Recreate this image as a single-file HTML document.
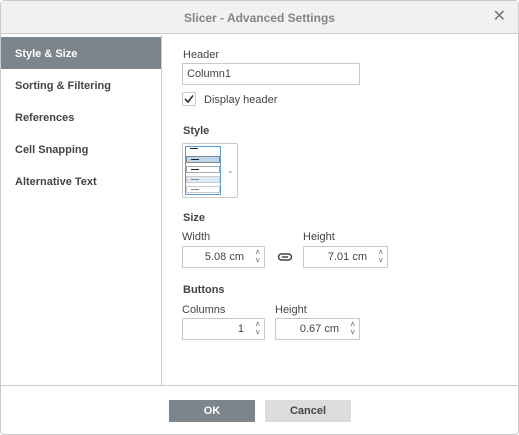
<!DOCTYPE html><html><head><style>
*{box-sizing:border-box;margin:0;padding:0}
body{width:519px;height:435px;background:#fff;font-family:"Liberation Sans",Arial,sans-serif;font-size:11px;color:#444;position:relative;overflow:hidden}
.frame{position:absolute;left:0;top:0;width:519px;height:435px;border:1px solid #cbcbcb;border-radius:4px}
.title{position:absolute;left:1px;top:1px;width:517px;height:33px;background:#f1f1f1;border-bottom:1px solid #cbcbcb;text-align:center;line-height:34px;font-size:12px;font-weight:bold;color:#848484}
.x{position:absolute;right:12px;top:8px;font-size:16px;color:#777;font-weight:normal;line-height:16px}
.side{position:absolute;left:161px;top:35px;height:350px;border-left:1px solid #cbcbcb}
.it{position:absolute;left:1px;width:160px;height:32px;line-height:34px;padding-left:14px;font-weight:bold;color:#444}
.sel{background:#7d858c;color:#fff}
.foot{position:absolute;left:1px;top:385px;width:517px;border-top:1px solid #cbcbcb}
.lbl{position:absolute;font-size:11px;color:#444}
.b{font-weight:bold}
.inp{position:absolute;border:1px solid #c8c8c8;height:22px;line-height:20px;font-size:11px;color:#444;border-radius:1px}
.num{text-align:right;padding-right:20px}
.sp{position:absolute;right:4px;top:2px;font-size:8px;line-height:8px;color:#555;text-align:center}
.btn{position:absolute;top:400px;height:22px;width:86px;line-height:22px;text-align:center;font-weight:bold;font-size:11px}
.row{position:absolute;left:3px;width:34px;height:7px;border:1px solid #aaa;background:#fff}
.row i{position:absolute;left:4px;top:2px;width:8px;border-top:1px solid #222}
</style></head><body>
<div class="frame"></div>
<div class="title">Slicer - Advanced Settings<span class="x">✕</span></div>
<div class="side"></div>
<div class="it sel" style="top:37px">Style &amp; Size</div>
<div class="it" style="top:69px">Sorting &amp; Filtering</div>
<div class="it" style="top:101px">References</div>
<div class="it" style="top:133px">Cell Snapping</div>
<div class="it" style="top:165px">Alternative Text</div>
<div class="lbl" style="left:183px;top:49px">Header</div>
<div class="inp" style="left:182px;top:63px;width:178px;padding-left:4px">Column1</div>
<div style="position:absolute;left:182px;top:92px;width:14px;height:14px;border:1px solid #c8c8c8;border-radius:2px"><svg width="12" height="12" viewBox="0 0 12 12"><path d="M2 6 L5 9 L10 2.5" stroke="#333" stroke-width="1.6" fill="none"/></svg></div>
<div class="lbl" style="left:204px;top:94px">Display header</div>
<div class="lbl b" style="left:183px;top:125px">Style</div>
<div style="position:absolute;left:182px;top:143px;width:56px;height:55px;border:1px solid #c8c8c8;border-radius:2px">
<div style="position:absolute;left:2px;top:2px;width:36px;height:49px;border:1px solid #5b9bd5"></div>
<div class="row" style="top:2px;border:none;background:none"><i></i></div>
<div class="row" style="top:12px;background:#bcd6ec;border-color:#888"><i></i></div>
<div class="row" style="top:22px"><i></i></div>
<div class="row" style="top:32px;background:#dde9f5;border-color:#ccc"><i style="border-color:#888"></i></div>
<div class="row" style="top:42px;border-color:#ccc"><i style="border-color:#888"></i></div>
<div style="position:absolute;left:44px;top:22px;font-size:8px;color:#888">⌄</div>
</div>
<div class="lbl b" style="left:183px;top:212px">Size</div>
<div class="lbl" style="left:182px;top:231px">Width</div>
<div class="lbl" style="left:303px;top:231px">Height</div>
<div class="inp num" style="left:182px;top:246px;width:83px">5.08 cm<div class="sp">˄<br>˅</div></div>
<svg style="position:absolute;left:277px;top:251px" width="16" height="12" viewBox="0 0 16 12"><rect x="1.5" y="3" width="13" height="6" rx="3" fill="none" stroke="#444" stroke-width="1.5"/><path d="M5 6 H11" stroke="#444" stroke-width="1.5"/></svg>
<div class="inp num" style="left:303px;top:246px;width:85px">7.01 cm<div class="sp">˄<br>˅</div></div>
<div class="lbl b" style="left:183px;top:284px">Buttons</div>
<div class="lbl" style="left:182px;top:304px">Columns</div>
<div class="lbl" style="left:275px;top:304px">Height</div>
<div class="inp num" style="left:182px;top:318px;width:83px">1<div class="sp">˄<br>˅</div></div>
<div class="inp num" style="left:275px;top:318px;width:85px">0.67 cm<div class="sp">˄<br>˅</div></div>
<div class="foot"></div>
<div class="btn" style="left:169px;background:#7d858c;color:#fff">OK</div>
<div class="btn" style="left:265px;background:#dcdcdc;color:#444">Cancel</div>
</body></html>
